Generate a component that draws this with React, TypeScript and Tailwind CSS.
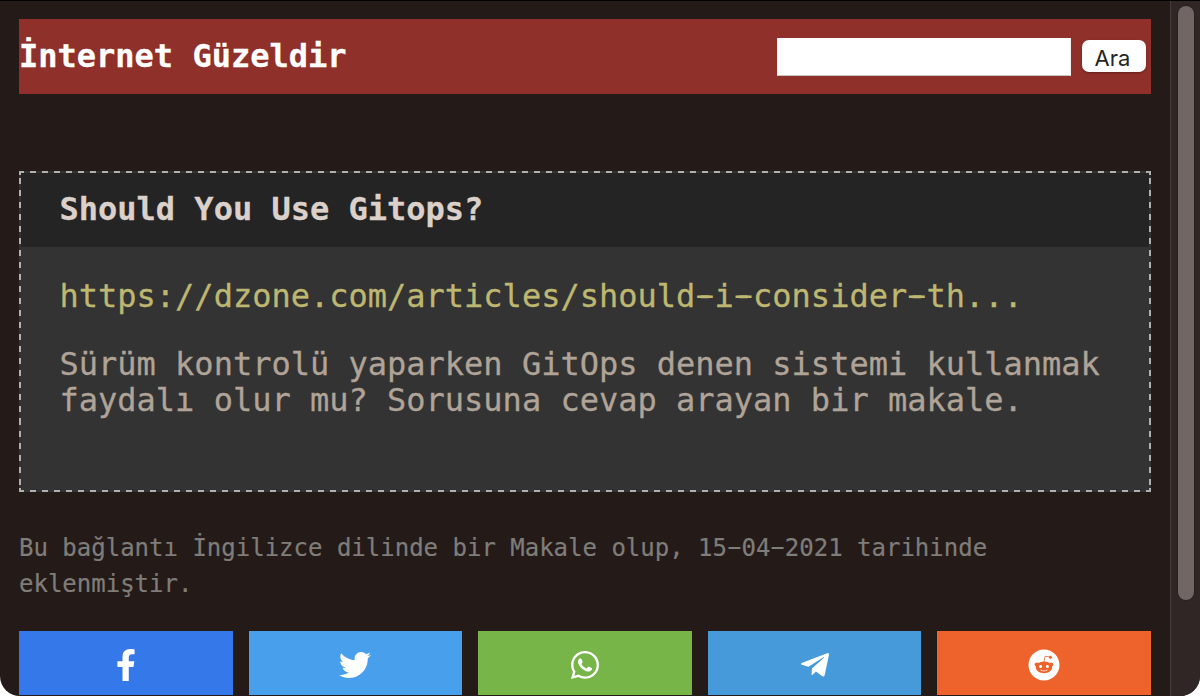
import { Fragment } from 'react';
import { FaFacebookF, FaTwitter, FaWhatsapp, FaTelegramPlane, FaReddit } from 'react-icons/fa';

const shares = [
  { name: 'Facebook', Icon: FaFacebookF, color: 'bg-[#3578ea]' },
  { name: 'Twitter', Icon: FaTwitter, color: 'bg-[#489fec]' },
  { name: 'WhatsApp', Icon: FaWhatsapp, color: 'bg-[#77b548]' },
  { name: 'Telegram', Icon: FaTelegramPlane, color: 'bg-[#479ada]' },
  { name: 'Reddit', Icon: FaReddit, color: 'bg-[#ee632c]' },
];

// Renders text with its hyphens widened to nearly the full character cell.
function WideHyphens({ text }: { text: string }) {
  return (
    <>
      {text.split('-').map((part, i) => (
        <Fragment key={i}>
          {i > 0 && (
            <span className="inline-block -translate-y-[0.04em] [text-shadow:0.12em_0_currentColor,-0.12em_0_currentColor]">
              -
            </span>
          )}
          {part}
        </Fragment>
      ))}
    </>
  );
}

function Header() {
  return (
    <header className="flex h-[75px] items-start justify-between bg-[#8f302a]">
      <h1 className="mt-[19px] text-[32px] leading-[37px] font-bold text-white [-webkit-text-stroke:0.3px]">
        İnternet Güzeldir
      </h1>
      <form className="mr-[5px] flex gap-[11px]" onSubmit={(e) => e.preventDefault()}>
        <input
          aria-label="Ara"
          className="mt-[19px] h-[38px] w-[294px] border border-b-[#c8c3c2] border-t-white border-x-[#f2eeee] bg-white px-1 outline-none"
        />
        <button className="mt-[21px] h-8 w-16 rounded-[7px] bg-white pr-[3px] pt-[4px] font-['Inter',sans-serif] text-[22px] leading-[28px] text-[#262626] shadow-[0_1px_2px_rgba(0,0,0,0.3)]">
          Ara
        </button>
      </form>
    </header>
  );
}

function Card() {
  return (
    <article className="mt-[77px] h-[321px] bg-[repeating-linear-gradient(90deg,#b0b0b0_0_5px,#333333_5px_11px,#b0b0b0_11px_12px)]">
      <div className="h-[321px] bg-[linear-gradient(#b0b0b0_0_4px,transparent_4px_317px,#b0b0b0_317px),repeating-linear-gradient(#b0b0b0_0_1.3px,#333333_1.3px_7.3px,#b0b0b0_7.3px_12.01px)] bg-[length:2px_100%] bg-[position:0_0] bg-no-repeat pl-[2px]">
        <div className="h-[321px] bg-[linear-gradient(#b0b0b0_0_4px,transparent_4px_317px,#b0b0b0_317px),repeating-linear-gradient(#b0b0b0_0_1.3px,#333333_1.3px_7.3px,#b0b0b0_7.3px_12.01px)] bg-[length:2px_100%] bg-[position:100%_0] bg-no-repeat py-[2px] pr-[2px]">
          <div className="h-[317px] bg-[#333333] [-webkit-text-stroke:0.3px]">
            <h2 className="h-[74px] bg-[#242424] pl-[38.5px] pt-[18px] text-[32px] leading-[37px] font-bold text-[#dbd1ca]">
              Should You Use Gitops?
            </h2>
            <div className="pl-[38.5px] pt-[31px] text-[32px] leading-[36px]">
              <a className="block h-9 text-[#beb771]">
                <WideHyphens text="https://dzone.com/articles/should-i-consider-th..." />
              </a>
              <p className="mt-[32px] text-[#b0a397]">
                Sürüm kontrolü yaparken GitOps denen sistemi kullanmak
                <br />
                faydalı olur mu? Sorusuna cevap arayan bir makale.
              </p>
            </div>
          </div>
        </div>
      </div>
    </article>
  );
}

export default function App() {
  return (
    <div className="h-[696px] w-[1200px] overflow-hidden bg-white">
      <div className="flex h-full overflow-hidden rounded-b-[20px] border-t border-black bg-[#241a18] font-['DejaVu_Sans_Mono',monospace]">
        <main className="w-[1170px] shrink-0 pl-[19px] pr-[19px] pt-[18px]">
          <Header />
          <Card />
          <p className="mt-[38px] text-[24px] leading-[36px] text-[#7f7d7a] [-webkit-text-stroke:0.2px]">
            <WideHyphens text="Bu bağlantı İngilizce dilinde bir Makale olup, 15-04-2021 tarihinde" />
            <br />
            eklenmiştir.
          </p>
          <nav className="mt-[29px] grid grid-cols-5 gap-4">
            {shares.map(({ name, Icon, color }) => (
              <a key={name} aria-label={name} className={`flex h-16 items-center justify-center text-white ${color}`}>
                <Icon size={32} className="mt-1" />
              </a>
            ))}
          </nav>
        </main>
        <aside className="flex-1 border-l border-[#463c3a] bg-[#302625] pl-[7px] pt-[5px]">
          <div className="h-[594px] w-4 rounded-full bg-[#716664] shadow-[0_0_1px_1px_rgba(0,0,0,0.15)]" />
        </aside>
      </div>
    </div>
  );
}
